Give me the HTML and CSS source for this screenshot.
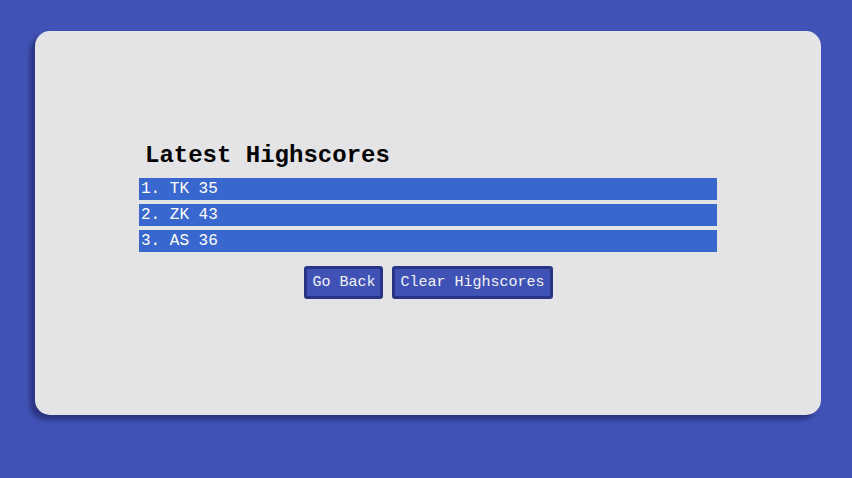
FILE: index.html
```html
<!DOCTYPE html>
<html>
<head>
<meta charset="utf-8">
<link rel="stylesheet" href="styles.css">
</head>
<body>
<main class="card">
  <section class="scores">
    <h2 class="title">Latest Highscores</h2>
    <ol class="list">
      <li class="row">1. TK 35</li>
      <li class="row">2. ZK 43</li>
      <li class="row">3. AS 36</li>
    </ol>
    <div class="actions">
      <button class="btn">Go Back</button>
      <button class="btn">Clear Highscores</button>
    </div>
  </section>
</main>
</body>
</html>
```
FILE: styles.css
```css
html, body {
  margin: 0;
  padding: 0;
}
body {
  background: #4052b5;
  width: 852px;
  height: 478px;
  overflow: hidden;
  font-family: "Liberation Mono", "Courier New", monospace;
  padding: 31px 0 0 35px;
  box-sizing: border-box;
}
.card {
  width: 786px;
  height: 384px;
  box-sizing: border-box;
  background: #e4e4e6;
  border-radius: 15px;
  box-shadow: -5px 5px 4px #2b3583;
  padding-top: 111px;
  display: flex;
  justify-content: center;
}
.scores {
  width: 578px;
}
.title {
  margin: 0 0 8px;
  padding-left: 6px;
  font-size: 24px;
  line-height: 28px;
  font-weight: bold;
  color: #000;
}
.list {
  list-style: none;
  margin: 0;
  padding: 0;
  display: flex;
  flex-direction: column;
  gap: 4px;
}
.row {
  background: #3867d0;
  color: #fff;
  font-size: 16px;
  line-height: 22px;
  height: 22px;
  padding-left: 2px;
}
.actions {
  margin-top: 14px;
  display: flex;
  justify-content: center;
  gap: 9px;
  padding-left: 1px;
}
.btn {
  font-family: "Liberation Mono", "Courier New", monospace;
  font-size: 15px;
  line-height: 17px;
  color: #f2f2f8;
  background: #4052b5;
  border: 3px solid #283584;
  border-radius: 3px;
  padding: 5px 5px;
  margin: 0;
}
```
